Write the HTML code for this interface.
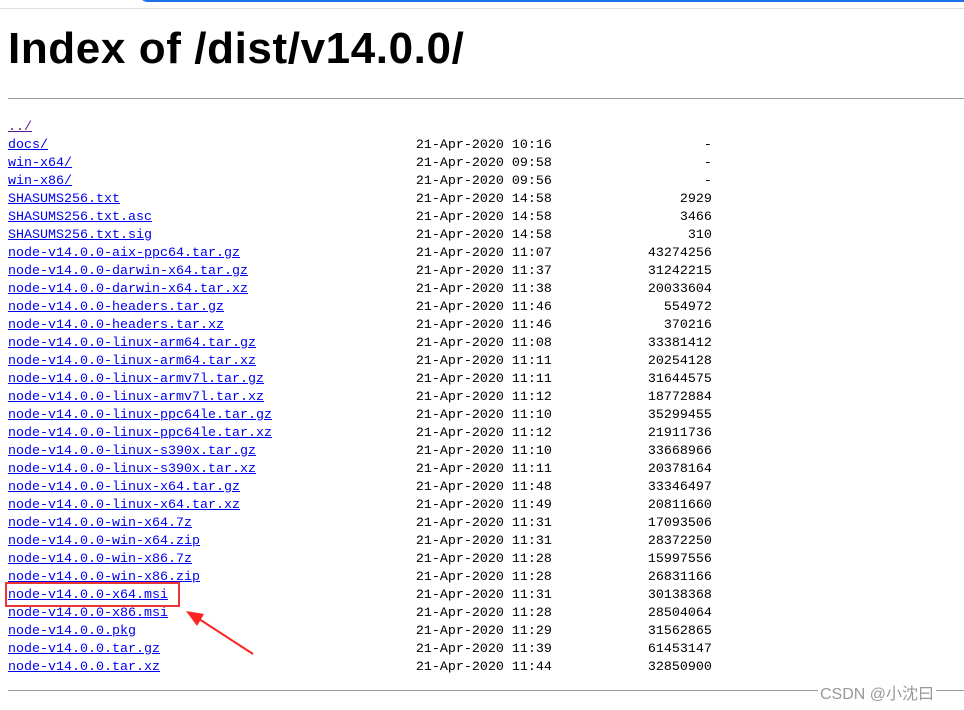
<!DOCTYPE html>
<html><head><meta charset="utf-8"><style>
body{margin:0;width:964px;height:710px;background:#fff;position:relative;overflow:hidden}
.topg{position:absolute;left:0;top:8px;width:964px;height:1px;background:#ddd}
.topb{position:absolute;left:138px;top:-8px;width:840px;height:8px;border:2px solid #1a73e8;border-top:none;border-radius:0 0 0 10px}
h1{position:absolute;left:8px;top:24px;margin:0;font:bold 44px "Liberation Sans",sans-serif;color:#000;letter-spacing:0.6px;line-height:50px}
.hr{position:absolute;left:8px;width:956px;height:1px;background:#999}
.rows{position:absolute;left:8px;top:119px;font:13.33px "Liberation Mono",monospace;line-height:18px;white-space:pre;color:#000}
a{color:#00e;text-decoration:underline}
a.v{color:#551a8b}
.box{position:absolute;left:5px;top:582px;width:175px;height:25px;border:2px solid #e33;box-sizing:border-box}
.wm{position:absolute;left:818px;top:680px;font:16px "Liberation Sans","Noto Sans CJK SC",sans-serif;color:#999;background:#fff;padding:0 2px}
</style></head><body>
<div class="topg"></div><div class="topb"></div>
<h1>Index of /dist/v14.0.0/</h1>
<div class="hr" style="top:98px"></div>
<div class="rows"><a class="v">../</a>
<a>docs/</a>                                              21-Apr-2020 10:16                   -
<a>win-x64/</a>                                           21-Apr-2020 09:58                   -
<a>win-x86/</a>                                           21-Apr-2020 09:56                   -
<a>SHASUMS256.txt</a>                                     21-Apr-2020 14:58                2929
<a>SHASUMS256.txt.asc</a>                                 21-Apr-2020 14:58                3466
<a>SHASUMS256.txt.sig</a>                                 21-Apr-2020 14:58                 310
<a>node-v14.0.0-aix-ppc64.tar.gz</a>                      21-Apr-2020 11:07            43274256
<a>node-v14.0.0-darwin-x64.tar.gz</a>                     21-Apr-2020 11:37            31242215
<a>node-v14.0.0-darwin-x64.tar.xz</a>                     21-Apr-2020 11:38            20033604
<a>node-v14.0.0-headers.tar.gz</a>                        21-Apr-2020 11:46              554972
<a>node-v14.0.0-headers.tar.xz</a>                        21-Apr-2020 11:46              370216
<a>node-v14.0.0-linux-arm64.tar.gz</a>                    21-Apr-2020 11:08            33381412
<a>node-v14.0.0-linux-arm64.tar.xz</a>                    21-Apr-2020 11:11            20254128
<a>node-v14.0.0-linux-armv7l.tar.gz</a>                   21-Apr-2020 11:11            31644575
<a>node-v14.0.0-linux-armv7l.tar.xz</a>                   21-Apr-2020 11:12            18772884
<a>node-v14.0.0-linux-ppc64le.tar.gz</a>                  21-Apr-2020 11:10            35299455
<a>node-v14.0.0-linux-ppc64le.tar.xz</a>                  21-Apr-2020 11:12            21911736
<a>node-v14.0.0-linux-s390x.tar.gz</a>                    21-Apr-2020 11:10            33668966
<a>node-v14.0.0-linux-s390x.tar.xz</a>                    21-Apr-2020 11:11            20378164
<a>node-v14.0.0-linux-x64.tar.gz</a>                      21-Apr-2020 11:48            33346497
<a>node-v14.0.0-linux-x64.tar.xz</a>                      21-Apr-2020 11:49            20811660
<a>node-v14.0.0-win-x64.7z</a>                            21-Apr-2020 11:31            17093506
<a>node-v14.0.0-win-x64.zip</a>                           21-Apr-2020 11:31            28372250
<a>node-v14.0.0-win-x86.7z</a>                            21-Apr-2020 11:28            15997556
<a>node-v14.0.0-win-x86.zip</a>                           21-Apr-2020 11:28            26831166
<a>node-v14.0.0-x64.msi</a>                               21-Apr-2020 11:31            30138368
<a>node-v14.0.0-x86.msi</a>                               21-Apr-2020 11:28            28504064
<a>node-v14.0.0.pkg</a>                                   21-Apr-2020 11:29            31562865
<a>node-v14.0.0.tar.gz</a>                                21-Apr-2020 11:39            61453147
<a>node-v14.0.0.tar.xz</a>                                21-Apr-2020 11:44            32850900
</div>
<div class="box"></div>
<svg style="position:absolute;left:0;top:0" width="964" height="710">
<line x1="253" y1="654" x2="196" y2="617" stroke="#f22" stroke-width="2"/>
<polygon points="186,611 204,614 197,626" fill="#f22"/>
</svg>
<div class="hr" style="top:690px"></div>
<div class="wm">CSDN @小沈曰</div>
</body></html>
